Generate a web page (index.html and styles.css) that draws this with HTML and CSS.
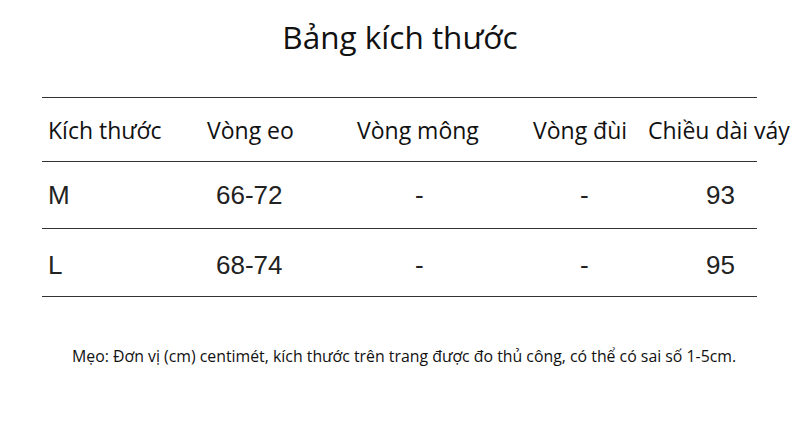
FILE: index.html
```html
<!DOCTYPE html>
<html lang="vi">
<head>
<meta charset="utf-8">
<title>Bảng kích thước</title>
<link rel="stylesheet" href="styles.css">
</head>
<body>
<div class="page">
  <h1 class="title">Bảng kích thước</h1>
  <div class="table">
    <div class="row head">
      <div class="cell c1">Kích thước</div>
      <div class="cell c2">Vòng eo</div>
      <div class="cell c3">Vòng mông</div>
      <div class="cell c4">Vòng đùi</div>
      <div class="cell c5">Chiều dài váy</div>
    </div>
    <div class="row body r1">
      <div class="cell c1">M</div>
      <div class="cell c2">66-72</div>
      <div class="cell c3">-</div>
      <div class="cell c4">-</div>
      <div class="cell c5">93</div>
    </div>
    <div class="row body r2">
      <div class="cell c1">L</div>
      <div class="cell c2">68-74</div>
      <div class="cell c3">-</div>
      <div class="cell c4">-</div>
      <div class="cell c5">95</div>
    </div>
  </div>
  <p class="note">Mẹo: Đơn vị (cm) centimét, kích thước trên trang được đo thủ công, có thể có sai số 1-5cm.</p>
</div>
</body>
</html>
```
FILE: styles.css
```css
html, body {
  margin: 0;
  padding: 0;
  background: #ffffff;
}
.page {
  width: 800px;
  height: 446px;
  box-sizing: border-box;
  padding-top: 16px;
  font-family: "Open Sans", "Noto Sans", sans-serif;
  color: #111;
}
.title {
  margin: 0;
  text-align: center;
  font-weight: 400;
  font-size: 31.5px;
  line-height: 42px;
}
.table {
  margin: 39px 43px 0 42px;
  border-top: 1.5px solid #333;
}
.row {
  display: grid;
  grid-template-columns: 158px 150px 175px 117px 1fr;
  align-items: center;
  border-bottom: 1.5px solid #333;
  white-space: nowrap;
}
.head {
  height: 63px;
  font-size: 23px;
}
.body {
  font-family: "Liberation Sans", Arial, sans-serif;
  font-size: 26px;
  color: #222;
}
.r1 { height: 66px; }
.r2 { height: 67px; }
.head .c1 { padding-left: 6px; }
.head .c2 { padding-left: 7px; }
.head .c3 { padding-left: 7px; }
.head .c4 { padding-left: 8px; }
.head .c5 { padding-left: 6px; }
.body .c1 { padding-left: 6px; }
.body .c2 { padding-left: 16px; }
.body .c3 { padding-left: 65px; }
.body .c4 { padding-left: 55px; }
.body .c5 { padding-left: 64px; }
.r1 .cell { padding-top: 0; }
.r2 .cell { padding-top: 6px; }
.note {
  margin: 48px 0 0 72px;
  font-size: 15.85px;
  line-height: 22px;
  color: #111;
}
```
